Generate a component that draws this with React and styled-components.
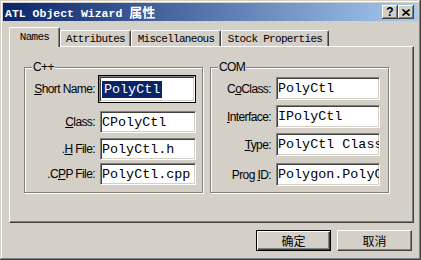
import React from 'react'
import styled, { createGlobalStyle } from 'styled-components'

const GlobalStyle = createGlobalStyle`
  html, body {
    margin: 0;
    padding: 0;
    background: #d4d0c8;
  }
  body {
    font-family: 'Liberation Sans', Arial, sans-serif;
  }
`

const Window = styled.div`
  width: 421px;
  height: 260px;
  box-sizing: border-box;
  padding: 3px;
  background: #d4d0c8;
  box-shadow: inset -1px -1px #404040, inset 1px 1px #d4d0c8,
    inset -2px -2px #808080, inset 2px 2px #fff;
  display: flex;
  flex-direction: column;
  overflow: hidden;
`

const TitleBar = styled.div`
  height: 18px;
  flex: none;
  display: flex;
  align-items: center;
  padding: 0 4px 0 2px;
  background: linear-gradient(to right, #0a246a, #a6caf0);
  color: #fff;
`

const Title = styled.div`
  flex: 1;
  font: bold 11.5px 'Liberation Mono', monospace;
  white-space: pre;
  line-height: 18px;
`

const TitleCjk = styled.span`
  font: bold 13px 'Noto Sans CJK SC', sans-serif;
`

const CaptionButton = styled.div`
  width: 16px;
  height: 14px;
  box-sizing: border-box;
  background: #d4d0c8;
  box-shadow: inset -1px -1px #404040, inset 1px 1px #fff, inset -2px -2px #808080;
  display: flex;
  align-items: center;
  justify-content: center;
  color: #000;
  font: bold 12px 'Liberation Sans', Arial, sans-serif;
`

const Body = styled.div`
  flex: 1;
  display: flex;
  flex-direction: column;
  padding: 6px 4px 0 6px;
`

const TabStrip = styled.div`
  display: flex;
  align-items: flex-end;
`

const Tab = styled.div`
  box-sizing: border-box;
  width: ${p => p.$w}px;
  height: ${p => (p.$active ? 20 : 16)}px;
  margin-bottom: ${p => (p.$active ? -1 : 0)}px;
  position: relative;
  z-index: ${p => (p.$active ? 1 : 0)};
  background: #d4d0c8;
  border-top: 1px solid #fff;
  border-left: 1px solid #fff;
  border-right: 1px solid #404040;
  border-radius: 2px 2px 0 0;
  box-shadow: inset -1px 0 #808080;
  display: flex;
  align-items: center;
  justify-content: center;
  padding-bottom: ${p => (p.$active ? 2 : 0)}px;
  font: 11px 'Liberation Mono', monospace;
  letter-spacing: -0.7px;
  color: #000;
`

const Panel = styled.div`
  box-sizing: border-box;
  height: 177px;
  flex: none;
  border-top: 1px solid #fff;
  border-left: 1px solid #fff;
  border-right: 1px solid #404040;
  border-bottom: 1px solid #404040;
  box-shadow: inset -1px -1px #808080;
  display: flex;
  gap: 7px;
  padding: 14px 0 0 14px;
`

const Group = styled.fieldset`
  margin: 0;
  padding: 0;
  min-width: 0;
  width: 179px;
  height: 132px;
  box-sizing: border-box;
  border: 1px solid #808080;
  box-shadow: inset 1px 1px #fff, 1px 1px #fff;
  display: flex;
  flex-direction: column;
`

const Legend = styled.legend`
  margin-left: 7px;
  padding: 0 1px;
  font: 12px 'Liberation Sans', Arial, sans-serif;
  letter-spacing: -0.6px;
  line-height: 12px;
  background: #d4d0c8;
  color: #000;
`

const Row = styled.div`
  display: flex;
  align-items: center;
  margin-top: ${p => p.$mt}px;
`

const Label = styled.label`
  width: ${p => p.$w}px;
  box-sizing: border-box;
  padding-right: 1px;
  text-align: right;
  font: 12px 'Liberation Sans', Arial, sans-serif;
  letter-spacing: -0.6px;
  color: #000;
  white-space: nowrap;
`

const Field = styled.div`
  box-sizing: border-box;
  width: ${p => p.$w}px;
  height: ${p => p.$h}px;
  margin-left: ${p => (p.$focused ? 3 : 4)}px;
  background: #fff;
  border: 1px solid;
  border-color: #808080 #fff #fff #808080;
  box-shadow: inset 1px 1px #404040, inset -1px -1px #d4d0c8;
  outline: ${p => (p.$focused ? '1px solid #000' : 'none')};
  padding-left: 1px;
  overflow: hidden;
  white-space: pre;
  display: flex;
  align-items: center;
  font: 13.4px 'Liberation Mono', monospace;
  color: #000;
`

const Selected = styled.span`
  background: #0a246a;
  color: #fff;
  padding: 1px 2px;
  margin-left: 1px;
  line-height: 15px;
`

const Footer = styled.div`
  display: flex;
  justify-content: flex-end;
  gap: 6px;
  margin-top: 7px;
  padding-right: 2px;
`

const Button = styled.button`
  width: 75px;
  height: 21px;
  box-sizing: border-box;
  padding: 0;
  background: #d4d0c8;
  border: 1px solid;
  border-color: ${p => (p.$default ? '#000' : '#fff #404040 #404040 #fff')};
  box-shadow: ${p =>
    p.$default
      ? 'inset 1px 1px #fff, inset -1px -1px #404040, inset -2px -2px #808080'
      : 'inset -1px -1px #808080'};
  font: 12px 'Noto Sans CJK SC', sans-serif;
  color: #000;
  line-height: 1;
`

const cppRows = [
  { pre: '', key: 'S', post: 'hort Name:', value: 'PolyCtl', mt: 3, h: 26, focused: true },
  { pre: '', key: 'C', post: 'lass:', value: 'CPolyCtl', mt: 9, h: 22 },
  { pre: '.', key: 'H', post: ' File:', value: 'PolyCtl.h', mt: 5, h: 22 },
  { pre: '.C', key: 'P', post: 'P File:', value: 'PolyCtl.cpp', mt: 3, h: 22 },
]

const comRows = [
  { pre: 'C', key: 'o', post: 'Class:', value: 'PolyCtl', mt: 4, h: 23 },
  { pre: '', key: 'I', post: 'nterface:', value: 'IPolyCtl', mt: 5, h: 23 },
  { pre: '', key: 'T', post: 'ype:', value: 'PolyCtl Class', mt: 5, h: 23 },
  { pre: 'Prog ', key: 'I', post: 'D:', value: 'Polygon.PolyCtl', mt: 7, h: 23 },
]

const tabs = [
  { name: 'Names', w: 51, active: true },
  { name: 'Attributes', w: 71 },
  { name: 'Miscellaneous', w: 90 },
  { name: 'Stock Properties', w: 108 },
]

function FieldGroup({ title, rows, labelWidth, fieldWidth }) {
  return (
    <Group>
      <Legend>{title}</Legend>
      {rows.map(r => (
        <Row key={r.post + r.value} $mt={r.mt}>
          <Label $w={labelWidth}>
            {r.pre}<u>{r.key}</u>{r.post}
          </Label>
          <Field $w={fieldWidth} $h={r.h} $focused={r.focused}>
            {r.focused ? <Selected>{r.value}</Selected> : r.value}
          </Field>
        </Row>
      ))}
    </Group>
  )
}

export default function App() {
  return (
    <>
      <GlobalStyle />
      <Window>
        <TitleBar>
          <Title>
            {'ATL Object Wizard '}<TitleCjk>属性</TitleCjk>
          </Title>
          <CaptionButton>?</CaptionButton>
          <CaptionButton>
            <svg width="8" height="7" viewBox="0 0 8 7">
              <path d="M0.5 0.5 L7.5 6.5 M7.5 0.5 L0.5 6.5" stroke="#000" strokeWidth="1.6" />
            </svg>
          </CaptionButton>
        </TitleBar>
        <Body>
          <TabStrip>
            {tabs.map(t => (
              <Tab key={t.name} $w={t.w} $active={t.active}>{t.name}</Tab>
            ))}
          </TabStrip>
          <Panel>
            <FieldGroup title="C++" rows={cppRows} labelWidth={71} fieldWidth={96} />
            <FieldGroup title="COM" rows={comRows} labelWidth={61} fieldWidth={104} />
          </Panel>
          <Footer>
            <Button $default>确定</Button>
            <Button>取消</Button>
          </Footer>
        </Body>
      </Window>
    </>
  )
}
